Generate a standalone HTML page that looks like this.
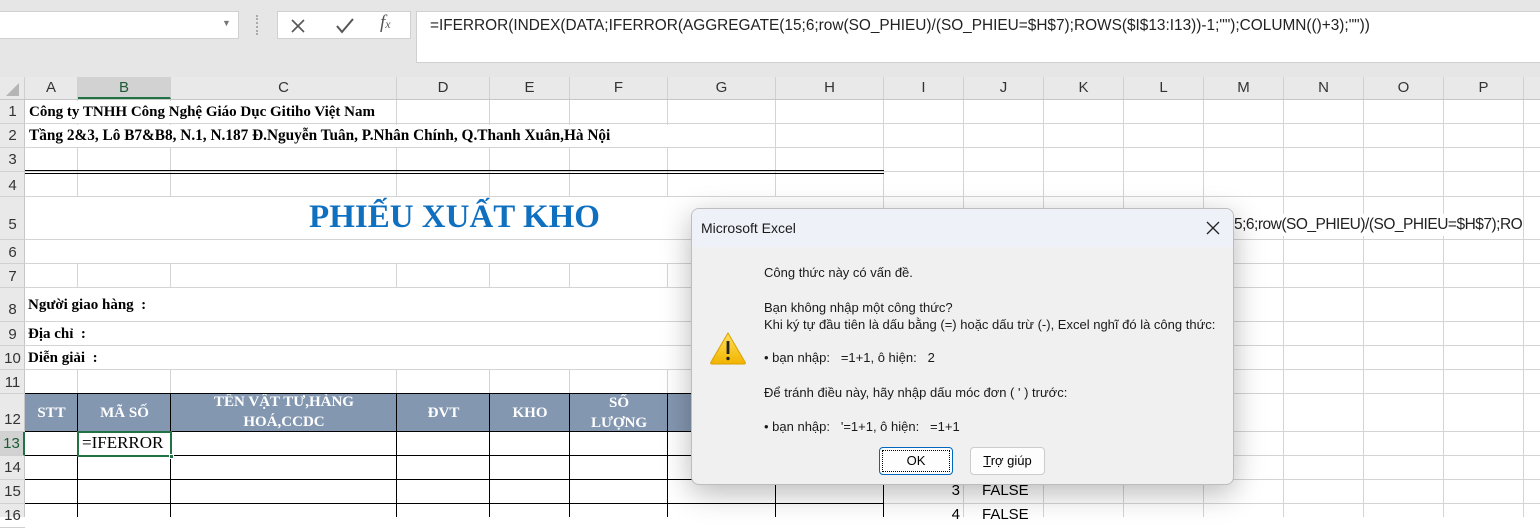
<!DOCTYPE html>
<html><head><meta charset="utf-8"><style>
body{margin:0;width:1540px;height:517px;overflow:hidden;background:#fff;position:relative;font-family:"Liberation Sans",sans-serif}
div{position:absolute;box-sizing:border-box}
.vl{width:1px;background:#d4d4d4}
.hl{height:1px;background:#d4d4d4}
.ch{top:77px;height:22px;font-size:15px;color:#333;text-align:center;line-height:22px;border-right:1px solid #d0d0d0}
.rh{left:0;width:25px;font-size:15px;color:#333;text-align:center;border-bottom:1px solid #d0d0d0}
.ser{font-family:"Liberation Serif",serif;font-weight:bold;font-size:15px;color:#000;white-space:nowrap}
.th{font-family:"Liberation Serif",serif;font-weight:bold;font-size:15px;color:#fff;text-align:center;display:flex;align-items:center;justify-content:center;line-height:20px}
.bk{background:#000}
.dt{font-size:13px;color:#1a1a1a;white-space:nowrap;left:72px}
</style></head><body>
<div style="left:0;top:0;width:1540px;height:77px;background:#e6e6e6"></div>
<div style="left:0;top:11px;width:239px;height:28px;background:#fff;border:1px solid #d0d0d0;border-left:none"></div>
<div style="left:222px;top:18px;font-size:9px;color:#777">▼</div>
<div style="left:256px;top:15px;width:3px;height:20px;border-left:2px dotted #aaa"></div>
<div style="left:277px;top:11px;width:134px;height:28px;background:#fff;border:1px solid #d0d0d0"></div>
<svg style="position:absolute;left:290px;top:18px" width="16" height="16"><path d="M2 2L14 14M14 2L2 14" stroke="#555" stroke-width="1.6"/></svg>
<svg style="position:absolute;left:335px;top:17px" width="20" height="18"><path d="M2 9L7 15L18 2" stroke="#555" stroke-width="2" fill="none"/></svg>
<div style="left:380px;top:12px;font-family:'Liberation Serif',serif;font-style:italic;font-size:19px;color:#555">f<span style="font-size:12px">x</span></div>
<div style="left:416px;top:11px;width:1124px;height:52px;background:#fff;border:1px solid #d0d0d0;border-right:none"></div>
<div style="left:430px;top:17px;font-size:15.4px;color:#222;white-space:nowrap">=IFERROR(INDEX(DATA;IFERROR(AGGREGATE(15;6;row(SO_PHIEU)/(SO_PHIEU=$H$7);ROWS($I$13:I13))-1;"");COLUMN(()+3);""))</div>
<div style="left:0;top:77px;width:1540px;height:23px;background:#e9e9e9;border-bottom:1px solid #c6c6c6"></div>
<div style="left:0;top:77px;width:25px;height:22px;border-right:1px solid #d0d0d0"><div style="left:6px;top:6px;width:0;height:0;border-left:13px solid transparent;border-bottom:13px solid #b5b5b5"></div></div>
<div class="ch" style="left:25px;width:53px">A</div>
<div class="ch" style="left:78px;width:93px;background:#d2d2d2;border-bottom:2px solid #217346;color:#1d5a35">B</div>
<div class="ch" style="left:171px;width:226px">C</div>
<div class="ch" style="left:397px;width:93px">D</div>
<div class="ch" style="left:490px;width:80px">E</div>
<div class="ch" style="left:570px;width:98px">F</div>
<div class="ch" style="left:668px;width:108px">G</div>
<div class="ch" style="left:776px;width:108px">H</div>
<div class="ch" style="left:884px;width:80px">I</div>
<div class="ch" style="left:964px;width:80px">J</div>
<div class="ch" style="left:1044px;width:80px">K</div>
<div class="ch" style="left:1124px;width:80px">L</div>
<div class="ch" style="left:1204px;width:80px">M</div>
<div class="ch" style="left:1284px;width:80px">N</div>
<div class="ch" style="left:1364px;width:80px">O</div>
<div class="ch" style="left:1444px;width:80px">P</div>
<div style="left:0;top:100px;width:25px;height:417px;background:#e9e9e9;border-right:1px solid #c6c6c6"></div>
<div class="rh" style="top:100px;height:24px;line-height:24px">1</div>
<div class="rh" style="top:124px;height:24px;line-height:24px">2</div>
<div class="rh" style="top:148px;height:24px;line-height:24px">3</div>
<div class="rh" style="top:172px;height:25px;line-height:28px">4</div>
<div class="rh" style="top:197px;height:43px;line-height:56px">5</div>
<div class="rh" style="top:240px;height:24px;line-height:26px">6</div>
<div class="rh" style="top:264px;height:24px;line-height:26px">7</div>
<div class="rh" style="top:288px;height:34px;line-height:44px">8</div>
<div class="rh" style="top:322px;height:24px;line-height:26px">9</div>
<div class="rh" style="top:346px;height:24px;line-height:26px">10</div>
<div class="rh" style="top:370px;height:24px;line-height:26px">11</div>
<div class="rh" style="top:394px;height:38px;line-height:52px">12</div>
<div class="rh" style="top:432px;height:24px;line-height:24px;background:#d2d2d2;color:#1d5a35;border-right:2px solid #217346">13</div>
<div class="rh" style="top:456px;height:24px;line-height:24px">14</div>
<div class="rh" style="top:480px;height:24px;line-height:24px">15</div>
<div class="rh" style="top:504px;height:24px;line-height:24px">16</div>
<div class="vl" style="left:77px;top:100px;height:417px"></div>
<div class="vl" style="left:170px;top:100px;height:417px"></div>
<div class="vl" style="left:396px;top:100px;height:417px"></div>
<div class="vl" style="left:489px;top:100px;height:417px"></div>
<div class="vl" style="left:569px;top:100px;height:417px"></div>
<div class="vl" style="left:667px;top:100px;height:417px"></div>
<div class="vl" style="left:775px;top:100px;height:417px"></div>
<div class="vl" style="left:883px;top:100px;height:417px"></div>
<div class="vl" style="left:963px;top:100px;height:417px"></div>
<div class="vl" style="left:1043px;top:100px;height:417px"></div>
<div class="vl" style="left:1123px;top:100px;height:417px"></div>
<div class="vl" style="left:1203px;top:100px;height:417px"></div>
<div class="vl" style="left:1283px;top:100px;height:417px"></div>
<div class="vl" style="left:1363px;top:100px;height:417px"></div>
<div class="vl" style="left:1443px;top:100px;height:417px"></div>
<div class="vl" style="left:1523px;top:100px;height:417px"></div>
<div class="hl" style="left:25px;top:123px;width:1515px"></div>
<div class="hl" style="left:25px;top:147px;width:1515px"></div>
<div class="hl" style="left:25px;top:171px;width:1515px"></div>
<div class="hl" style="left:25px;top:196px;width:1515px"></div>
<div class="hl" style="left:25px;top:239px;width:1515px"></div>
<div class="hl" style="left:25px;top:263px;width:1515px"></div>
<div class="hl" style="left:25px;top:287px;width:1515px"></div>
<div class="hl" style="left:25px;top:321px;width:1515px"></div>
<div class="hl" style="left:25px;top:345px;width:1515px"></div>
<div class="hl" style="left:25px;top:369px;width:1515px"></div>
<div class="hl" style="left:25px;top:393px;width:1515px"></div>
<div class="hl" style="left:25px;top:431px;width:1515px"></div>
<div class="hl" style="left:25px;top:455px;width:1515px"></div>
<div class="hl" style="left:25px;top:479px;width:1515px"></div>
<div class="hl" style="left:25px;top:503px;width:1515px"></div>
<div style="left:25px;top:197px;width:858px;height:42px;background:#fff"></div>
<div style="left:25px;top:240px;width:858px;height:23px;background:#fff"></div>
<div style="left:25px;top:288px;width:858px;height:33px;background:#fff"></div>
<div style="left:25px;top:322px;width:858px;height:23px;background:#fff"></div>
<div style="left:25px;top:346px;width:858px;height:23px;background:#fff"></div>
<div style="left:25px;top:370px;width:52px;height:23px;background:#fff"></div>
<div class="ser" style="left:26px;top:101px;height:22px;line-height:22px;background:#fff;padding:0 3px;width:370px">Công ty TNHH Công Nghệ Giáo Dục Gitiho Việt Nam</div>
<div class="ser" style="left:26px;top:125px;height:22px;line-height:22px;background:#fff;padding:0 3px;width:643px;font-size:15.3px">Tầng 2&amp;3, Lô B7&amp;B8, N.1, N.187 Đ.Nguyễn Tuân, P.Nhân Chính, Q.Thanh Xuân,Hà Nội</div>
<div style="left:25px;top:170px;width:859px;height:4px;border-top:1px solid #000;border-bottom:1px solid #000"></div>
<div style="left:25px;top:199px;width:859px;text-align:center;font-family:'Liberation Serif',serif;font-weight:bold;font-size:33px;color:#1070c0">PHIẾU XUẤT KHO</div>
<div class="ser" style="left:28px;top:297px">Người giao hàng &nbsp;:</div>
<div class="ser" style="left:28px;top:326px">Địa chỉ &nbsp;:</div>
<div class="ser" style="left:28px;top:350px">Diễn giải &nbsp;:</div>
<div style="left:25px;top:394px;width:859px;height:38px;background:#8497b0"></div>
<div class="th" style="left:25px;top:394px;width:53px;height:38px">STT</div>
<div class="th" style="left:78px;top:394px;width:93px;height:38px">MÃ SỐ</div>
<div class="th" style="left:171px;top:393px;width:226px;height:38px">TÊN VẬT TƯ,HÀNG<br>HOÁ,CCDC</div>
<div class="th" style="left:397px;top:394px;width:93px;height:38px">ĐVT</div>
<div class="th" style="left:490px;top:394px;width:80px;height:38px">KHO</div>
<div class="th" style="left:570px;top:394px;width:98px;height:38px">SỐ<br>LƯỢNG</div>
<div class="bk" style="left:25px;top:393px;width:859px;height:1px"></div>
<div class="bk" style="left:25px;top:431px;width:859px;height:1px"></div>
<div class="bk" style="left:25px;top:455px;width:859px;height:1px"></div>
<div class="bk" style="left:25px;top:479px;width:859px;height:1px"></div>
<div class="bk" style="left:25px;top:503px;width:859px;height:1px"></div>
<div class="bk" style="left:77px;top:393px;width:1px;height:124px"></div>
<div class="bk" style="left:170px;top:393px;width:1px;height:124px"></div>
<div class="bk" style="left:396px;top:393px;width:1px;height:124px"></div>
<div class="bk" style="left:489px;top:393px;width:1px;height:124px"></div>
<div class="bk" style="left:569px;top:393px;width:1px;height:124px"></div>
<div class="bk" style="left:667px;top:393px;width:1px;height:124px"></div>
<div class="bk" style="left:775px;top:393px;width:1px;height:124px"></div>
<div class="bk" style="left:883px;top:393px;width:1px;height:124px"></div>
<div style="left:77px;top:431px;width:95px;height:26px;border:2px solid #217346"></div>
<div style="left:169px;top:454px;width:5px;height:5px;background:#217346;border:1px solid #fff"></div>
<div style="left:82px;top:433px;font-family:'Liberation Serif',serif;font-size:17px;color:#000;background:#fff">=IFERROR</div>
<div style="left:884px;top:482px;width:76px;text-align:right;font-size:15px">3</div>
<div style="left:982px;top:482px;font-size:15px">FALSE</div>
<div style="left:884px;top:506px;width:76px;text-align:right;font-size:15px">4</div>
<div style="left:982px;top:506px;font-size:15px">FALSE</div>
<div style="left:1234px;top:214px;font-size:15.5px;color:#222;white-space:nowrap;background:#fff;height:22px;line-height:22px;letter-spacing:-0.5px">5;6;row(SO_PHIEU)/(SO_PHIEU=$H$7);RO</div>
<div style="left:691px;top:208px;width:543px;height:277px;background:#f0f0f0;border:1px solid #bdbdbd;border-radius:8px;box-shadow:0 8px 30px rgba(0,0,0,0.28);overflow:hidden">
 <div style="left:0;top:0;width:543px;height:38px;background:#eef1f8"></div>
 <div style="left:9px;top:11px;font-size:14px;color:#1a1a1a">Microsoft Excel</div>
 <svg style="position:absolute;left:514px;top:12px" width="14" height="14"><path d="M1 1L13 13M13 1L1 13" stroke="#222" stroke-width="1.3"/></svg>
 <div class="dt" style="top:56px">Công thức này có vấn đề.</div>
 <div class="dt" style="top:91px">Bạn không nhập một công thức?</div>
 <div class="dt" style="top:108px">Khi ký tự đầu tiên là dấu bằng (=) hoặc dấu trừ (-), Excel nghĩ đó là công thức:</div>
 <div class="dt" style="top:141px">• bạn nhập: &nbsp; =1+1, ô hiện: &nbsp; 2</div>
 <div class="dt" style="top:176px">Để tránh điều này, hãy nhập dấu móc đơn ( ' ) trước:</div>
 <div class="dt" style="top:210px">• bạn nhập: &nbsp; '=1+1, ô hiện: &nbsp; =1+1</div>
 <svg style="position:absolute;left:17px;top:122px" width="38" height="34"><defs><linearGradient id="g" x1="0" y1="0" x2="0" y2="1"><stop offset="0" stop-color="#ffe15a"/><stop offset="1" stop-color="#f2b400"/></linearGradient></defs><path d="M19 2L36 31Q37 33 35 33H3Q1 33 2 31Z" fill="url(#g)" stroke="#d9a000" stroke-width="1"/><rect x="17.6" y="10" width="2.8" height="13" fill="#222"/><circle cx="19" cy="27.5" r="1.7" fill="#222"/></svg>
 <div style="left:187px;top:238px;width:74px;height:28px;background:#fdfdfd;border:1px solid #0067c0;border-radius:4px"><div style="left:2px;top:2px;width:68px;height:22px;border:1px dotted #000"></div><div style="left:0;top:5px;width:72px;text-align:center;font-size:13px">OK</div></div>
 <div style="left:278px;top:238px;width:75px;height:28px;background:#fdfdfd;border:1px solid #ccc;border-radius:4px"><div style="left:0;top:5px;width:73px;text-align:center;font-size:13px"><u>T</u>rợ giúp</div></div>
</div>
</body></html>
